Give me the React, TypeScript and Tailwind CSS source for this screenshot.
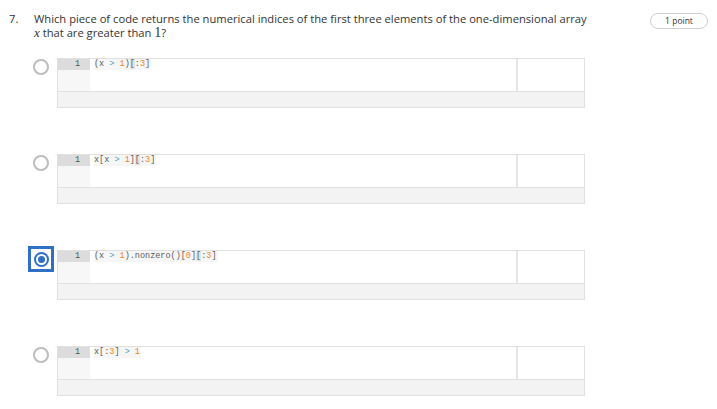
const mono = "font-['Liberation_Mono',monospace]";

type Tok = { t: string; c?: "op" | "num" | "hl" };

const options: Tok[][] = [
  [{ t: "(x " }, { t: ">", c: "op" }, { t: " " }, { t: "1", c: "num" }, { t: ")" }, { t: "[", c: "hl" }, { t: ":" }, { t: "3", c: "num" }, { t: "]" }],
  [{ t: "x[x " }, { t: ">", c: "op" }, { t: " " }, { t: "1", c: "num" }, { t: "]" }, { t: "[", c: "hl" }, { t: ":" }, { t: "3", c: "num" }, { t: "]" }],
  [{ t: "(x " }, { t: ">", c: "op" }, { t: " " }, { t: "1", c: "num" }, { t: ").nonzero()[" }, { t: "0", c: "num" }, { t: "]" }, { t: "[", c: "hl" }, { t: ":" }, { t: "3", c: "num" }, { t: "]" }],
  [{ t: "x[:" }, { t: "3", c: "num" }, { t: "] " }, { t: ">", c: "op" }, { t: " " }, { t: "1", c: "num" }],
];

function tokClass(c?: Tok["c"]) {
  if (c === "op") return "text-[#4aa8b8]";
  if (c === "num") return "text-[#f0870f]";
  if (c === "hl") return "bg-[#e4e4e4]";
  return "";
}

function Radio({ checked }: { checked: boolean }) {
  if (checked) {
    return (
      <div className="w-[26px] h-[26px] border-[3px] border-[#2f6fc4] bg-white flex items-center justify-center">
        <div className="w-[15px] h-[15px] rounded-full border-2 border-[#2f6fc4] flex items-center justify-center">
          <div className="w-[7px] h-[7px] rounded-full bg-[#2f6fc4]" />
        </div>
      </div>
    );
  }
  return (
    <div className="w-[26px] h-[26px] flex items-center justify-center">
      <div className="w-[16px] h-[16px] rounded-full border-2 border-[#bdbdbd] bg-white" />
    </div>
  );
}

function CodeBox({ tokens }: { tokens: Tok[] }) {
  return (
    <div className="w-[528px] h-[50px] border border-[#e0e0e0] flex flex-col">
      <div className="flex h-[32px]">
        <div className="w-[32px] shrink-0 bg-[#f7f7f7]">
          <div className={`h-[11px] bg-[#dcdcdc] text-[8.5px] leading-[11px] text-[#555] text-right pr-[10px] ${mono}`}>1</div>
        </div>
        <div className="flex-1 flex items-start pl-[4px]">
          <div className={`h-[11px] bg-[#f6f6f6] text-[8.5px] leading-[11px] text-[#5a5a5a] whitespace-pre pr-[1px] ${mono}`}>
            {tokens.map((tk, i) => (
              <span key={i} className={tokClass(tk.c)}>{tk.t}</span>
            ))}
          </div>
        </div>
        <div className="w-[2px] bg-[#e3e7eb]" />
        <div className="w-[66px]" />
      </div>
      <div className="flex-1 bg-[#f3f3f3] border-t border-[#e2e2e2]" />
    </div>
  );
}

export default function App() {
  return (
    <div className="w-[717px] h-[409px] bg-white text-[#333] font-['Open_Sans',sans-serif] overflow-hidden">
      {/* HEADER */}
      <div className="flex pt-[12px] pl-[9px] pr-[9px]">
        <div className="w-[25px] text-[11.2px] leading-[14px]">7.</div>
        <div className="flex-1 text-[11.2px] leading-[14px]">
          <div>Which piece of code returns the numerical indices of the first three elements of the one-dimensional array</div>
          <div>
            <span className="font-['Liberation_Serif',serif] italic text-[13px]">x</span> that are greater than{" "}
            <span className="font-['Liberation_Serif',serif] text-[14px]">1</span>?
          </div>
        </div>
        <div className="w-[58px] h-[16px] mt-[1px] rounded-full border border-[#cfcfcf] text-[8.5px] leading-[14px] text-center text-[#333]">
          1 point
        </div>
      </div>

      {/* OPTIONS */}
      <div className="pl-[28px] mt-[18px] flex flex-col gap-[46px]">
        {options.map((tokens, i) => (
          <div key={i} className="flex items-start">
            <div className="-mt-[4px] mr-[3px]">
              <Radio checked={i === 2} />
            </div>
            <CodeBox tokens={tokens} />
          </div>
        ))}
      </div>
    </div>
  );
}
